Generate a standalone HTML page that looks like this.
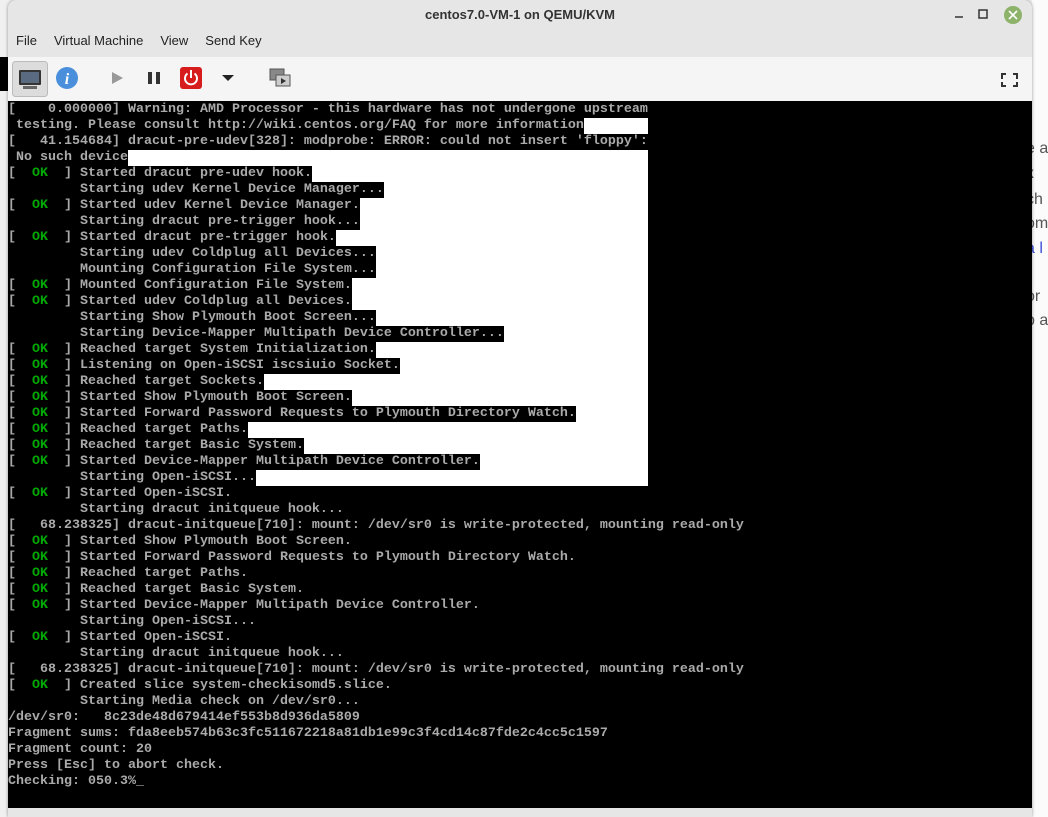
<!DOCTYPE html>
<html><head><meta charset="utf-8"><style>
html,body{margin:0;padding:0;width:1048px;height:817px;overflow:hidden;background:#f0f0f0;font-family:"Liberation Sans",sans-serif;}
.bgpage{position:absolute;left:1032px;top:0;width:16px;height:817px;background:#fbfbfb;}
.bgtext{position:absolute;left:1026px;font-size:16px;color:#555;white-space:nowrap;}
.win{position:absolute;left:8px;top:0;width:1024px;height:817px;background:#e6e6e6;border-radius:8px 8px 0 0;box-shadow:0 0 3px rgba(0,0,0,.4);overflow:hidden;}
.title{position:absolute;top:0;left:0;width:100%;height:28px;line-height:29px;text-align:center;font-size:13px;font-weight:bold;color:#333;}
.menu{position:absolute;top:33px;left:8px;font-size:13px;color:#222;}
.menu span{margin-right:17px;}
.tb{position:absolute;top:57px;left:0;width:100%;height:44px;background:#f5f5f5;}
.con{position:absolute;top:101px;left:0;width:1024px;height:707px;background:#000;}
.txt{position:absolute;left:0;top:1px;font-family:"Liberation Mono",monospace;font-size:13.33px;line-height:16px;color:#aaa;font-weight:bold;}
.txt div{white-space:pre;height:16px;}
.txt div.f{display:flex;width:640px;}
.txt div.f::after{content:"";flex:1;background:#fff;}
.g{color:#00aa00}
</style></head><body>
<div class="bgpage"></div>
<div style="position:absolute;left:0;top:57px;width:8px;height:34px;background:#000"></div>
<div class="bgtext" style="top:140px">e a</div>
<div class="bgtext" style="top:165px">x</div>
<div class="bgtext" style="top:191px">ch</div>
<div class="bgtext" style="top:215px">om</div>
<div class="bgtext" style="top:240px;color:#3b4fd8">a l</div>
<div class="bgtext" style="top:288px">or</div>
<div class="bgtext" style="top:312px">p a</div>
<div class="win">
<div class="title">centos7.0-VM-1 on QEMU/KVM</div>
<svg style="position:absolute;left:0;top:0" width="1024" height="30">
<line x1="947" y1="17" x2="955" y2="17" stroke="#333" stroke-width="1.5"/>
<rect x="971" y="10" width="8" height="8" fill="none" stroke="#333" stroke-width="1.5"/>
<circle cx="1005" cy="15" r="9" fill="#8db36a"/>
<path d="M1001 11 L1009 19 M1009 11 L1001 19" stroke="#fff" stroke-width="1.6"/>
</svg>
<div class="menu"><span>File</span><span>Virtual Machine</span><span>View</span><span>Send Key</span></div>
<div class="tb">
<svg width="1024" height="44">
<rect x="4.5" y="4.5" width="35" height="35" rx="3" fill="#dcdcdc" stroke="#bbb"/>
<rect x="11" y="13" width="22" height="15" rx="1" fill="#333"/>
<rect x="13" y="15" width="18" height="11" fill="#5a6a80"/>
<rect x="15" y="29" width="14" height="3" fill="#666"/>
<circle cx="59" cy="21" r="11" fill="#4a8fdc"/>
<text x="59" y="27" font-family="Liberation Serif" font-style="italic" font-weight="bold" font-size="16" fill="#fff" text-anchor="middle">i</text>
<path d="M104 15 L104 27 L115 21 Z" fill="#999"/>
<rect x="140" y="15" width="4" height="12" fill="#333"/><rect x="148" y="15" width="4" height="12" fill="#333"/>
<rect x="172" y="10" width="22" height="22" rx="3" fill="#d61c1c"/>
<path d="M179.5 16.5 A6 6 0 1 0 186.5 16.5" fill="none" stroke="#fff" stroke-width="2"/>
<line x1="183" y1="13" x2="183" y2="21" stroke="#fff" stroke-width="2"/>
<path d="M214 18 L226 18 L220 24 Z" fill="#222"/>
<rect x="262" y="12" width="14" height="11" fill="#888" stroke="#555"/>
<rect x="268" y="18" width="14" height="11" fill="#ccc" stroke="#555"/>
<path d="M273 21 L273 27 L278 24 Z" fill="#333"/>
<path d="M994 22 V17 H998 M1005 17 H1009 V22 M1009 25 V29 H1005 M998 29 H994 V25" fill="none" stroke="#333" stroke-width="2"/>
</svg>
</div>
<div class="con"><div class="txt">
<div>[    0.000000] Warning: AMD Processor - this hardware has not undergone upstream</div>
<div class="f"> testing. Please consult http://wiki.centos.org/FAQ for more information</div>
<div>[   41.154684] dracut-pre-udev[328]: modprobe: ERROR: could not insert 'floppy':</div>
<div class="f"> No such device</div>
<div class="f">[  <span class="g">OK</span>  ] Started dracut pre-udev hook.</div>
<div class="f">         Starting udev Kernel Device Manager...</div>
<div class="f">[  <span class="g">OK</span>  ] Started udev Kernel Device Manager.</div>
<div class="f">         Starting dracut pre-trigger hook...</div>
<div class="f">[  <span class="g">OK</span>  ] Started dracut pre-trigger hook.</div>
<div class="f">         Starting udev Coldplug all Devices...</div>
<div class="f">         Mounting Configuration File System...</div>
<div class="f">[  <span class="g">OK</span>  ] Mounted Configuration File System.</div>
<div class="f">[  <span class="g">OK</span>  ] Started udev Coldplug all Devices.</div>
<div class="f">         Starting Show Plymouth Boot Screen...</div>
<div class="f">         Starting Device-Mapper Multipath Device Controller...</div>
<div class="f">[  <span class="g">OK</span>  ] Reached target System Initialization.</div>
<div class="f">[  <span class="g">OK</span>  ] Listening on Open-iSCSI iscsiuio Socket.</div>
<div class="f">[  <span class="g">OK</span>  ] Reached target Sockets.</div>
<div class="f">[  <span class="g">OK</span>  ] Started Show Plymouth Boot Screen.</div>
<div class="f">[  <span class="g">OK</span>  ] Started Forward Password Requests to Plymouth Directory Watch.</div>
<div class="f">[  <span class="g">OK</span>  ] Reached target Paths.</div>
<div class="f">[  <span class="g">OK</span>  ] Reached target Basic System.</div>
<div class="f">[  <span class="g">OK</span>  ] Started Device-Mapper Multipath Device Controller.</div>
<div class="f">         Starting Open-iSCSI...</div>
<div>[  <span class="g">OK</span>  ] Started Open-iSCSI.</div>
<div>         Starting dracut initqueue hook...</div>
<div>[   68.238325] dracut-initqueue[710]: mount: /dev/sr0 is write-protected, mounting read-only</div>
<div>[  <span class="g">OK</span>  ] Started Show Plymouth Boot Screen.</div>
<div>[  <span class="g">OK</span>  ] Started Forward Password Requests to Plymouth Directory Watch.</div>
<div>[  <span class="g">OK</span>  ] Reached target Paths.</div>
<div>[  <span class="g">OK</span>  ] Reached target Basic System.</div>
<div>[  <span class="g">OK</span>  ] Started Device-Mapper Multipath Device Controller.</div>
<div>         Starting Open-iSCSI...</div>
<div>[  <span class="g">OK</span>  ] Started Open-iSCSI.</div>
<div>         Starting dracut initqueue hook...</div>
<div>[   68.238325] dracut-initqueue[710]: mount: /dev/sr0 is write-protected, mounting read-only</div>
<div>[  <span class="g">OK</span>  ] Created slice system-checkisomd5.slice.</div>
<div>         Starting Media check on /dev/sr0...</div>
<div>/dev/sr0:   8c23de48d679414ef553b8d936da5809</div>
<div>Fragment sums: fda8eeb574b63c3fc511672218a81db1e99c3f4cd14c87fde2c4cc5c1597</div>
<div>Fragment count: 20</div>
<div>Press [Esc] to abort check.</div>
<div>Checking: 050.3%_</div>
</div></div>
</div>
</body></html>
